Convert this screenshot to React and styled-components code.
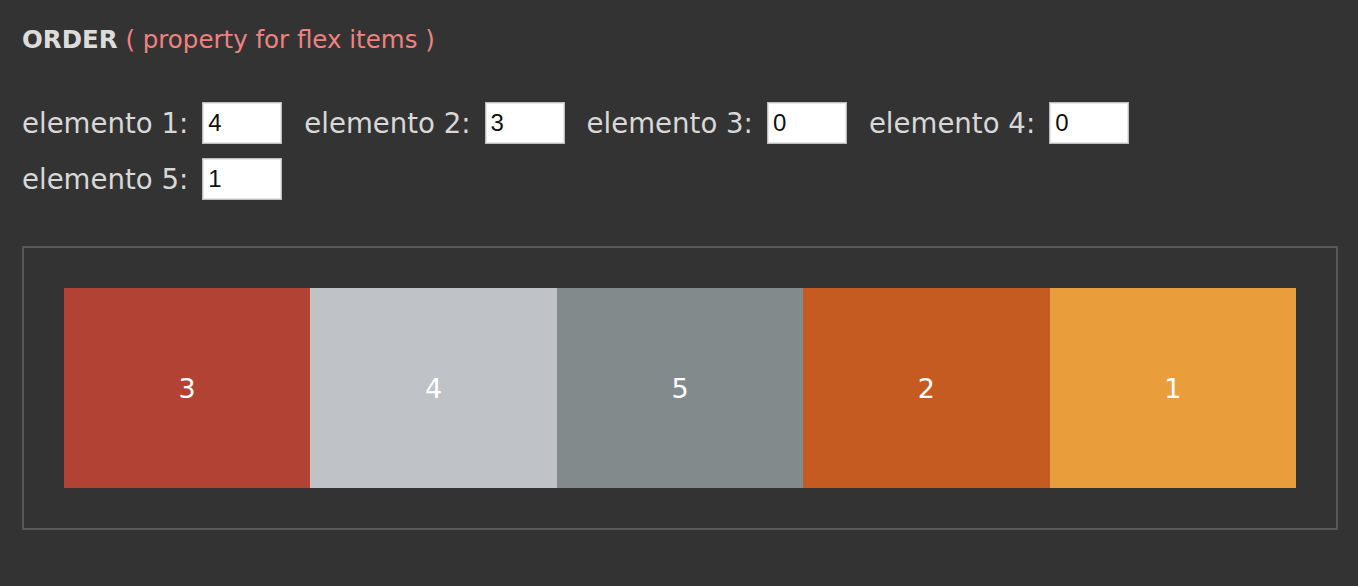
import React, { useState } from "react";
import styled, { createGlobalStyle } from "styled-components";

const GlobalStyle = createGlobalStyle`
  html, body {
    margin: 0;
    padding: 0;
    background: #333333;
  }
  body {
    font-family: "DejaVu Sans", Verdana, sans-serif;
  }
`;

const Page = styled.div`
  padding: 26px 20px 56px 22px;
  min-height: 586px;
  box-sizing: border-box;
`;

const Title = styled.h2`
  margin: 0;
  font-size: 24.5px;
  line-height: 28px;
  font-weight: normal;
`;

const Name = styled.span`
  font-weight: bold;
  color: #dcdcdc;
`;

const Hint = styled.span`
  color: #ef8280;
`;

const Controls = styled.div`
  display: flex;
  flex-wrap: wrap;
  column-gap: 22px;
  row-gap: 14px;
  margin-top: 48px;
`;

const Field = styled.label`
  display: flex;
  align-items: center;
  gap: 14px;
  font-size: 27.6px;
  color: #d8d8d8;
`;

const NumberInput = styled.input`
  width: 80px;
  height: 42px;
  box-sizing: border-box;
  padding: 0 5px;
  border: 1px solid #bdbdbd;
  box-shadow: inset 0 0 0 1px #e6e6e6;
  background: #ffffff;
  font-family: "Liberation Sans", Arial, sans-serif;
  font-size: 24px;
  color: #111111;
  outline: none;
`;

const Board = styled.div`
  display: flex;
  margin-top: 46px;
  padding: 40px;
  border: 2px solid #585858;
`;

const Block = styled.div`
  flex: 1;
  height: 200px;
  display: flex;
  align-items: center;
  justify-content: center;
  background: ${(p) => p.$color};
  color: #ffffff;
  font-size: 27px;
`;

const items = [
  { id: 1, color: "#e99e3b", order: 4 },
  { id: 2, color: "#c65b22", order: 3 },
  { id: 3, color: "#b24334", order: 0 },
  { id: 4, color: "#bfc2c6", order: 0 },
  { id: 5, color: "#838a8b", order: 1 },
];

const App = () => {
  const [orders, setOrders] = useState(items.map((item) => item.order));

  const change = (index, value) => {
    const next = [...orders];
    next[index] = value;
    setOrders(next);
  };

  return (
    <Page>
      <GlobalStyle />
      <Title>
        <Name>ORDER</Name> <Hint>( property for flex items )</Hint>
      </Title>
      <Controls>
        {items.map((item, i) => (
          <Field key={item.id}>
            elemento {item.id}:
            <NumberInput
              type="text"
              value={orders[i]}
              onChange={(e) => change(i, e.target.value)}
            />
          </Field>
        ))}
      </Controls>
      <Board>
        {items.map((item, i) => (
          <Block
            key={item.id}
            $color={item.color}
            style={{ order: Number(orders[i]) || 0 }}
          >
            {item.id}
          </Block>
        ))}
      </Board>
    </Page>
  );
};

export default App;
